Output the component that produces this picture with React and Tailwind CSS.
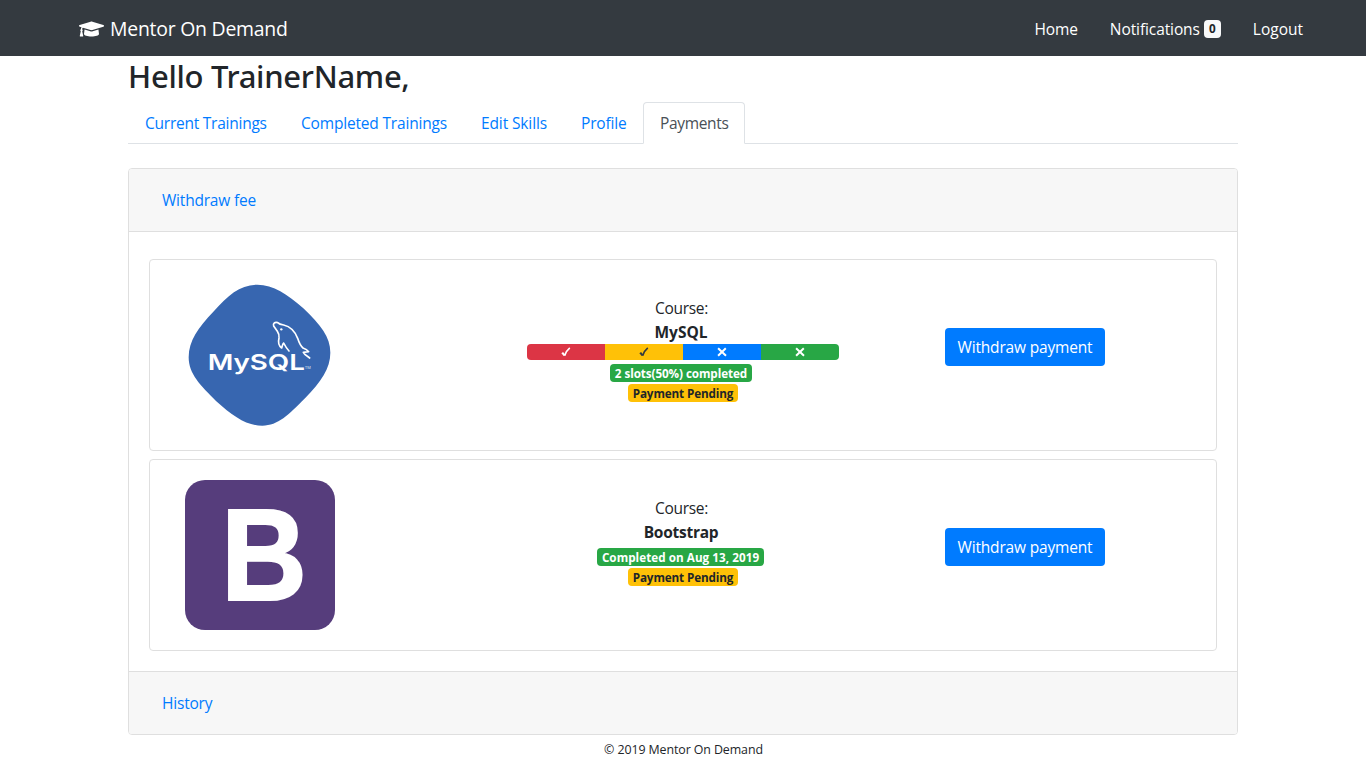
import { FaGraduationCap } from "react-icons/fa";

const tabs = [
  { label: "Current Trainings", width: "w-[156px]", tracking: "tracking-[-0.24px]" },
  { label: "Completed Trainings", width: "w-[180px]", tracking: "tracking-[-0.18px]" },
  { label: "Edit Skills", width: "w-[100px]", tracking: "tracking-[-0.12px]" },
  { label: "Profile", width: "w-[79px]", tracking: "tracking-[-0.15px]" },
  { label: "Payments", width: "w-[102px]", tracking: "tracking-[-0.33px]", active: true },
];

function Check() {
  return (
    <svg width="10" height="10" viewBox="0 0 10 10" fill="none" stroke="currentColor" strokeLinejoin="round">
      <path d="M1.2 5.6 L3.5 8.4" strokeWidth="2.2" />
      <path d="M3.6 8.8 C4.6 5.6 6.2 3 8.8 0.9" strokeWidth="1.7" />
    </svg>
  );
}

function Cross() {
  return (
    <svg width="10" height="10" viewBox="0 0 10 10" fill="none" stroke="currentColor" strokeWidth="2">
      <path d="M1.1 1.2 L9 8.8 M8.8 1.2 L1.1 8.8" />
    </svg>
  );
}

function MySqlLogo() {
  return (
    <svg width="150" height="150" viewBox="45 30 450 450" className="block">
      <path
        fill="#3766b0"
        d="M262 44 C310 44 352 72 400 115 C452 165 481 200 481 248 C481 295 453 335 405 385 C355 435 325 467 277 467 C230 467 190 440 138 393 C92 347 56 312 56 262 C56 212 85 172 130 125 C175 75 210 44 262 44Z"
      />
      <text
        x="113"
        y="300"
        fill="#fff"
        fontFamily="Inter, sans-serif"
        fontWeight="600"
        fontSize="66"
        textLength="292"
        lengthAdjust="spacingAndGlyphs"
      >
        MySQL
      </text>
      <text x="404" y="298" fill="#dbe5f3" fontFamily="Inter, sans-serif" fontSize="10" textLength="18" lengthAdjust="spacingAndGlyphs">
        TM
      </text>
      <g fill="none" stroke="#fff" strokeWidth="5" strokeLinejoin="round" strokeLinecap="round">
        <path d="M357 243 C350 236 345 227 341 219 C338 221 337 227 335 234 C327 228 324 216 327 204 C328 198 326 190 322 184 L311 168 C308 159 315 156 323 158 C328 163 333 164 341 165 C363 170 376 187 383 205 C387 218 391 227 399 234 C407 237 412 240 416 245 L400 247 C404 255 412 258 419 264" />
      </g>
      <circle cx="334" cy="178" r="3.5" fill="#fff" />
    </svg>
  );
}

function BootstrapLogo() {
  return (
    <svg width="150" height="150" viewBox="0 0 150 150" className="block">
      <rect width="150" height="150" rx="20" fill="#563d7c" />
      <text
        x="36"
        y="119.5"
        fill="#fff"
        stroke="#fff"
        strokeWidth="2"
        fontFamily="'Liberation Sans', Arial, sans-serif"
        fontWeight="700"
        fontSize="130"
        textLength="86"
        lengthAdjust="spacingAndGlyphs"
      >
        B
      </text>
    </svg>
  );
}

function Badge({ className, children }) {
  return (
    <div className={`flex h-[18px] items-center justify-center whitespace-nowrap rounded text-[11.7px] font-bold leading-none ${className}`}>
      <span className="pt-px">{children}</span>
    </div>
  );
}

function SlotBar() {
  return (
    <div className="mb-1 grid h-4 w-[312px] grid-cols-4 overflow-hidden rounded text-white">
      <div className="flex items-center justify-center bg-[#dc3545]"><Check /></div>
      <div className="flex items-center justify-center bg-[#ffc107] text-[#343a40]"><Check /></div>
      <div className="flex items-center justify-center bg-[#007bff]"><Cross /></div>
      <div className="flex items-center justify-center bg-[#28a745]"><Cross /></div>
    </div>
  );
}

function CourseCard({ logo, name, nameClass, children }) {
  return (
    <div className="flex h-48 rounded border border-[#dfdfdf] py-5 pl-[35px]">
      <div className="w-[150px]">{logo}</div>
      <div className="ml-[192px] flex w-[312px] flex-col items-center pt-4">
        <div className="-ml-1 h-6 pl-px leading-6 tracking-[-0.3px]">Course:</div>
        <div className={`-ml-1 h-6 leading-6 font-bold ${nameClass}`}>{name}</div>
        {children}
      </div>
      <button className="ml-[106px] mt-12 h-[38px] w-40 rounded bg-[#007bff] text-white tracking-[-0.17px]">
        Withdraw payment
      </button>
    </div>
  );
}

export default function App() {
  return (
    <div className="h-[768px] overflow-hidden bg-white font-['Open_Sans',sans-serif] text-[15.5px] leading-6 text-[#212529]">
      <nav className="flex h-14 items-center justify-between bg-[#343a40] pl-[79px] pr-[63px] pt-px text-white">
        <a className="flex items-center gap-[6px] text-[19.4px] tracking-[-0.22px]">
          <FaGraduationCap className="h-5 w-[25px]" />
          <span>Mentor On Demand</span>
        </a>
        <div className="flex items-center">
          <a className="mr-8 tracking-[-0.1px]">Home</a>
          <a className="mr-8 flex items-center gap-1 tracking-[-0.1px]">
            Notifications
            <span className="flex h-[18px] w-[17px] items-center justify-center rounded bg-[#f8f9fa] pt-px text-[11.7px] font-bold leading-none text-[#212529]">
              0
            </span>
          </a>
          <a>Logout</a>
        </div>
      </nav>
      <main className="mx-auto w-[1110px]">
        <h1 className="h-[46px] whitespace-nowrap pt-px font-['Noto_Sans',sans-serif] text-[31px] font-medium leading-[38px] tracking-[-0.3px]">
          Hello TrainerName,
        </h1>
        <div className="flex h-[42px] border-b border-[#dee2e6]">
          {tabs.map((t) => (
            <a
              key={t.label}
              className={`h-[42px] whitespace-nowrap rounded-t border px-4 pt-2 ${t.width} ${t.tracking} ${
                t.active ? "border-[#dee2e6] border-b-white bg-white text-[#495057]" : "border-transparent text-[#007bff]"
              }`}
            >
              {t.label}
            </a>
          ))}
        </div>
        <section className="mt-6 h-[567px] overflow-hidden rounded border border-[#dfdfdf]">
          <div className="flex h-[63px] items-center border-b border-[#dfdfdf] bg-[#f7f7f7] pl-[33px] tracking-[-0.2px] text-[#007bff]">
            Withdraw fee
          </div>
          <div className="flex h-[439px] flex-col gap-2 px-5 pt-[27px]">
            <CourseCard logo={<MySqlLogo />} name="MySQL" nameClass="">
              <SlotBar />
              <Badge className="-ml-1 w-[142px] bg-[#28a745] tracking-[-0.08px] text-white">2 slots(50%) completed</Badge>
              <Badge className="mt-0.5 w-[110px] bg-[#ffc107] tracking-[-0.12px]">Payment Pending</Badge>
            </CourseCard>
            <CourseCard logo={<BootstrapLogo />} name="Bootstrap" nameClass="tracking-[-0.25px]">
              <Badge className="-ml-[5px] mt-1 w-[167px] bg-[#28a745] tracking-[0.04px] text-white">Completed on Aug 13, 2019</Badge>
              <Badge className="mt-0.5 w-[110px] bg-[#ffc107] tracking-[-0.12px]">Payment Pending</Badge>
            </CourseCard>
          </div>
          <div className="flex h-[64px] items-center border-t border-[#dfdfdf] bg-[#f7f7f7] pb-px pl-[33px] tracking-[-0.2px] text-[#007bff]">
            History
          </div>
        </section>
      </main>
      <footer className="pl-px pt-[3px] text-center text-[12.4px] tracking-[-0.09px]">© 2019 Mentor On Demand</footer>
    </div>
  );
}
